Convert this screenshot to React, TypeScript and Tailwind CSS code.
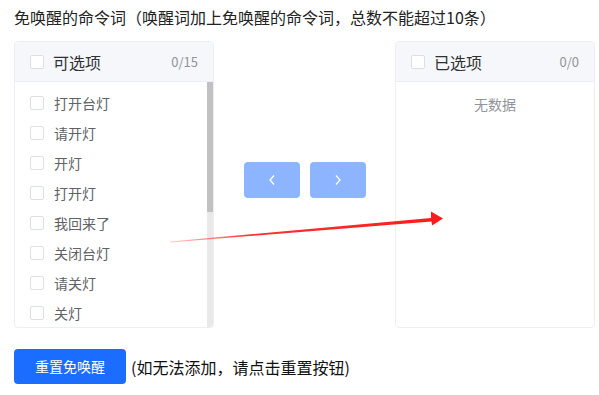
import React from "react";

const items = [
  "打开台灯",
  "请开灯",
  "开灯",
  "打开灯",
  "我回来了",
  "关闭台灯",
  "请关灯",
  "关灯",
];

function Box() {
  return (
    <span className="inline-block w-[14px] h-[14px] shrink-0 rounded-[2px] border border-[#dcdfe6] bg-white" />
  );
}

function Header({ title, count }: { title: string; count: string }) {
  return (
    <div className="flex items-center h-[40px] px-[15px] bg-[#f5f7fa] border-b border-[#ebeef5] rounded-t-[4px]">
      <Box />
      <span className="ml-[9px] text-[16px] text-[#303133] leading-[20px] flex-1">{title}</span>
      <span className="text-[13px] text-[#909399]">{count}</span>
    </div>
  );
}

export default function App() {
  return (
    <div
      className="relative w-[599px] h-[395px] bg-white pl-[14px] pr-[4px] pt-[5px]"
      style={{ fontFamily: '"Noto Sans CJK SC", "Noto Sans", sans-serif' }}
    >
      <div className="h-[24px] leading-[24px] text-[16px] text-[#222]">
        免唤醒的命令词（唤醒词加上免唤醒的命令词，总数不能超过10条）
      </div>

      <div className="mt-[12px] flex h-[287px]">
        <div className="w-[200px] h-full border border-[#ebeef5] rounded-[4px] flex flex-col overflow-hidden">
          <Header title="可选项" count="0/15" />
          <div className="flex flex-1 min-h-0">
            <div className="flex-1 pt-[6px] overflow-hidden">
              {items.map((t) => (
                <div key={t} className="flex items-center h-[30px] pl-[15px]">
                  <Box />
                  <span className="ml-[10px] text-[14px] text-[#606266] leading-[20px]">{t}</span>
                </div>
              ))}
            </div>
            <div className="w-[6px] bg-[#e9e9e9] flex flex-col">
              <div className="h-[130px] bg-[#c1c1c1] rounded-b-[1px]" />
            </div>
          </div>
        </div>

        <div className="flex-1 flex items-center justify-center gap-[10px] pb-[9px]">
          <button className="w-[56px] h-[36px] rounded-[4px] bg-[#8db5ff] flex items-center justify-center">
            <svg width="10" height="12" viewBox="0 0 10 12" fill="none">
              <path d="M7 1.5 L3 6 L7 10.5" stroke="white" strokeWidth="1.3" />
            </svg>
          </button>
          <button className="w-[56px] h-[36px] rounded-[4px] bg-[#8db5ff] flex items-center justify-center">
            <svg width="10" height="12" viewBox="0 0 10 12" fill="none">
              <path d="M3 1.5 L7 6 L3 10.5" stroke="white" strokeWidth="1.3" />
            </svg>
          </button>
        </div>

        <div className="w-[200px] h-full border border-[#ebeef5] rounded-[4px] flex flex-col">
          <Header title="已选项" count="0/0" />
          <div className="pt-[7px] text-center text-[14px] leading-[30px] text-[#909399]">无数据</div>
        </div>
      </div>

      <div className="mt-[21px] flex items-center">
        <button className="w-[112px] h-[35px] rounded-[4px] bg-[#1b6dff] text-white text-[14px]">
          重置免唤醒
        </button>
        <span className="ml-[5px] text-[16px] text-[#111]">(如无法添加，请点击重置按钮)</span>
      </div>

      <svg
        className="absolute left-0 top-0 pointer-events-none"
        width="599"
        height="395"
        viewBox="0 0 599 395"
      >
        <defs>
          <linearGradient id="ag" x1="170" y1="0" x2="443" y2="0" gradientUnits="userSpaceOnUse">
            <stop offset="0" stopColor="#ff3030" stopOpacity="0.25" />
            <stop offset="0.3" stopColor="#ff1a1a" stopOpacity="0.9" />
            <stop offset="1" stopColor="#ff1a1a" />
          </linearGradient>
        </defs>
        <polygon
          points="170,241.6 431,218 431,211.5 443,218.5 432,225.5 431.5,221.5 170,242.4"
          fill="url(#ag)"
        />
      </svg>
    </div>
  );
}
